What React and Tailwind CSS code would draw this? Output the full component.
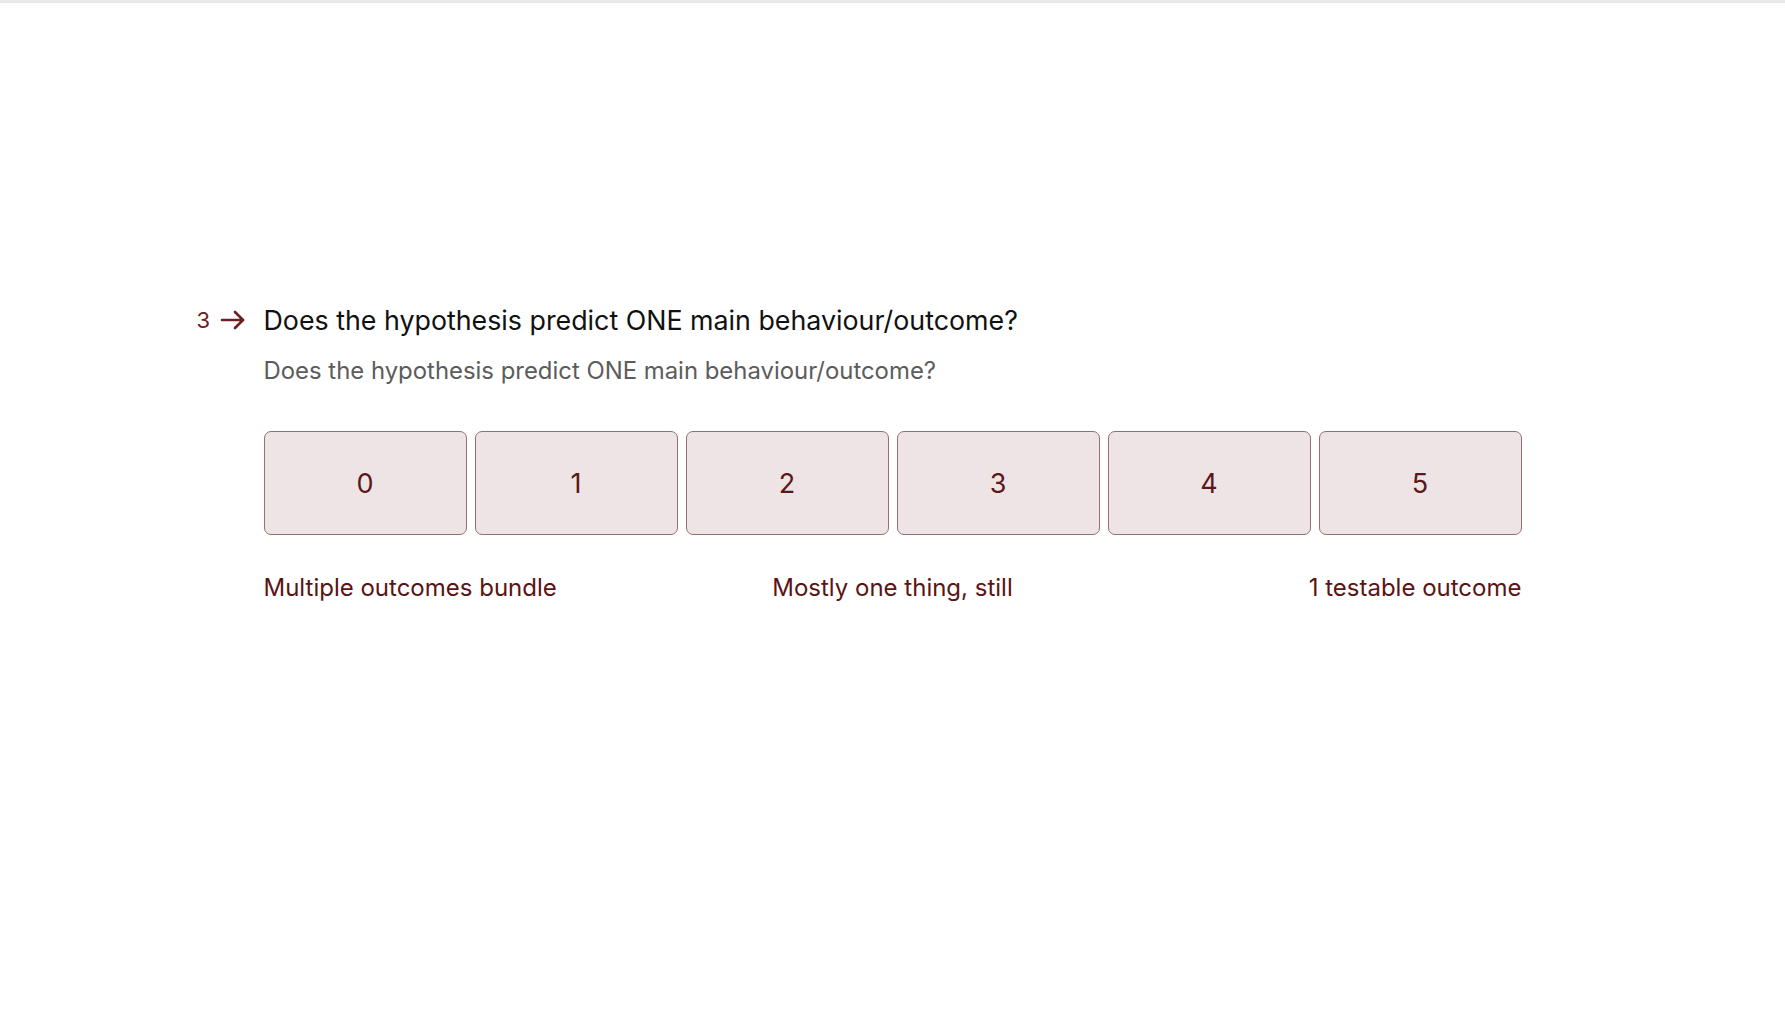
import React from 'react';

const options = [0, 1, 2, 3, 4, 5];

const App = () => {
  return (
    <div className="min-h-screen bg-white" style={{ fontFamily: 'Inter, "Noto Sans", sans-serif' }}>
      {/* Progress track */}
      <div className="h-[3px] w-full bg-[#e8e8e8]" />

      <main className="mx-auto w-[1258px] pt-[301px]">
        {/* Question heading */}
        <div className="flex items-start">
          <div className="-ml-[67px] flex h-[32px] w-[67px] items-center text-[#6b1f1f]">
            <span className="text-[22px] leading-none">3</span>
            <svg className="ml-[10px]" width="25" height="20" viewBox="0 0 25 20" fill="none" stroke="currentColor" strokeWidth="2.6" strokeLinecap="round" strokeLinejoin="round">
              <path d="M2 10h21" />
              <path d="M15 2l8 8-8 8" />
            </svg>
          </div>
          <h2 className="text-[26.8px] leading-[32px] font-normal text-[#111111]">
            Does the hypothesis predict ONE main behaviour/outcome?
          </h2>
        </div>

        <p className="mt-[21px] text-[23.9px] leading-[28px] text-[#5c5c5c]">
          Does the hypothesis predict ONE main behaviour/outcome?
        </p>

        {/* Scale */}
        <div className="mt-[46px] grid grid-cols-6 gap-[8px]">
          {options.map((n) => (
            <button
              key={n}
              className="flex h-[104px] items-center justify-center rounded-[7px] border-[1.5px] border-[#957070] bg-[#efe4e5] pt-[3px] text-[27px] text-[#5a1818]"
            >
              {n}
            </button>
          ))}
        </div>

        <div className="mt-[39px] flex justify-between text-[24px] leading-[28px] text-[#5a1414]">
          <span className="w-[400px]">Multiple outcomes bundle</span>
          <span>Mostly one thing, still</span>
          <span className="w-[400px] text-right">1 testable outcome</span>
        </div>
      </main>
    </div>
  );
};

export default App;
